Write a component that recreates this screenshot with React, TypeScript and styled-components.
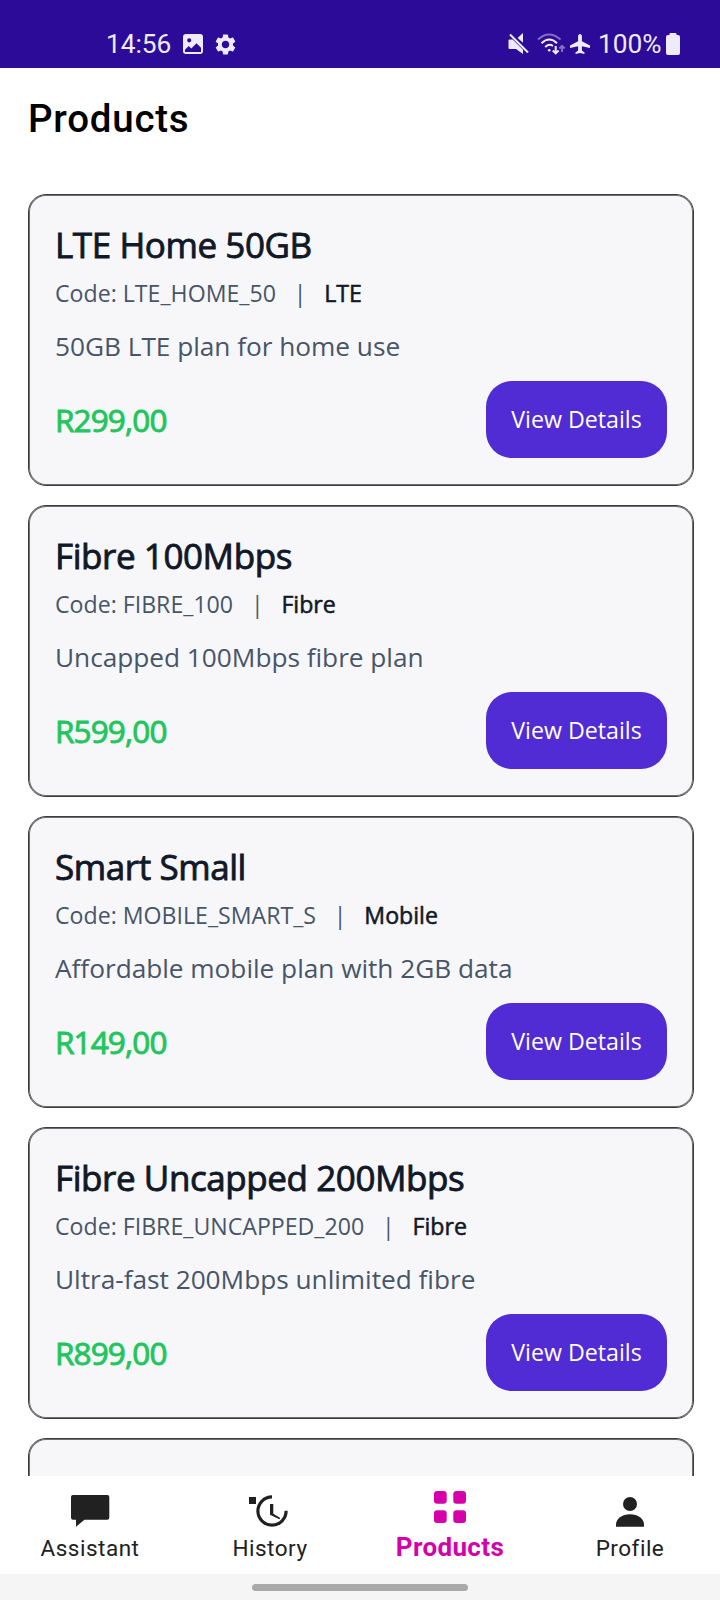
import React from 'react';
import styled, { createGlobalStyle } from 'styled-components';
import { MdSettings } from 'react-icons/md';

const GlobalStyle = createGlobalStyle`
  * { box-sizing: border-box; }
  body { margin: 0; background: #fff; }
`;

const Screen = styled.div`
  width: 720px;
  height: 1600px;
  display: flex;
  flex-direction: column;
  overflow: hidden;
  background: #fff;
  font-family: 'Open Sans', sans-serif;
`;

const StatusBar = styled.header`
  flex: none;
  height: 68px;
  padding: 20px 40px 0 106px;
  display: flex;
  justify-content: space-between;
  background: #2b0b98;
  color: #f0ebfb;
`;

const StatusGroup = styled.div`
  height: 48px;
  display: flex;
  align-items: center;
  svg { display: block; flex: none; }
`;

const StatusText = styled.span<{ $width: number }>`
  width: ${p => p.$width}px;
  font: 400 26.25px/48px Roboto, sans-serif;
  white-space: nowrap;
`;

const PageTitle = styled.h1`
  flex: none;
  height: 126px;
  margin: 0;
  padding: 28px 28px 0;
  font: 500 38.5px/45px Roboto, sans-serif;
  letter-spacing: 0.75px;
  color: #000;
`;

const ProductList = styled.main`
  flex: 1;
  min-height: 0;
  padding: 0 26px 0 28px;
  display: flex;
  flex-direction: column;
  gap: 19px;
  overflow: hidden;
`;

const Card = styled.article`
  flex: none;
  height: 292px;
  padding: 26px 26px 0 26px;
  border: 1px solid #3c3c3c;
  border-radius: 18px;
  box-shadow: inset 0 0 0 1px rgba(64, 64, 64, 0.75);
  background: #f7f7fa;
`;

const ProductName = styled.h2`
  margin: 0;
  font-weight: 400;
  font-size: 35px;
  line-height: 48px;
  letter-spacing: -0.42px;
  color: #111827;
  -webkit-text-stroke: 0.85px #111827;
`;

const Meta = styled.div`
  margin-top: 9px;
  display: flex;
  gap: 17.8px;
  font-size: 23.15px;
  line-height: 31px;
  color: #475569;
`;

const Category = styled.span`
  color: #111827;
  -webkit-text-stroke: 0.55px #111827;
`;

const Description = styled.p`
  margin: 19px 0 0;
  font-size: 26.25px;
  line-height: 36px;
  letter-spacing: -0.03px;
  color: #475569;
`;

const CardFooter = styled.div`
  margin-top: 17px;
  display: flex;
  align-items: center;
  justify-content: space-between;
`;

const Price = styled.span`
  padding-bottom: 1px;
  font-size: 31.5px;
  line-height: 43px;
  letter-spacing: -0.87px;
  color: #22c55e;
  -webkit-text-stroke: 0.9px #22c55e;
`;

const DetailsButton = styled.button`
  width: 181px;
  height: 77px;
  padding: 0;
  border: 0;
  border-radius: 26px;
  background: #512bd4;
  color: #fff;
  font: 400 23.2px/31px 'Open Sans', sans-serif;
`;

const TabBar = styled.nav`
  flex: none;
  height: 98px;
  display: grid;
  grid-template-columns: repeat(4, 1fr);
  background: #fff;
`;

const Tab = styled.div<{ $active?: boolean }>`
  padding-top: 12px;
  display: flex;
  flex-direction: column;
  align-items: center;
  color: ${p => (p.$active ? '#d600aa' : '#212121')};
  svg { display: block; }
`;

const TabLabel = styled.span<{ $active?: boolean }>`
  margin-top: ${p => (p.$active ? 4 : 5)}px;
  font-family: Roboto, sans-serif;
  font-weight: ${p => (p.$active ? 700 : 400)};
  font-size: ${p => (p.$active ? 26 : 22.5)}px;
  line-height: 30px;
  letter-spacing: ${p => (p.$active ? 0.35 : 0.5)}px;
`;

const GestureArea = styled.footer`
  flex: none;
  height: 26px;
  padding-top: 10px;
  background: #f5f5f5;
`;

const GestureHandle = styled.div`
  width: 216px;
  height: 7px;
  margin: 0 auto;
  border-radius: 4px;
  background: #a9a9a9;
`;

const GalleryIcon = () => (
  <svg width="20" height="20" viewBox="0 0 20 20">
    <path
      fill="currentColor"
      fillRule="evenodd"
      d="M3 0h14a3 3 0 0 1 3 3v14a3 3 0 0 1-3 3H3a3 3 0 0 1-3-3V3a3 3 0 0 1 3-3zM6.2 4.2a2.1 2.1 0 1 0 0 4.2 2.1 2.1 0 0 0 0-4.2zM2 15.8V18h16v-4.2l-4.5-4.6-5.2 5.2-2.6-2.4z"
    />
  </svg>
);

const MutedIcon = () => (
  <svg width="22" height="22" viewBox="0 0 22 22">
    <path fill="currentColor" d="M15 0v9.8L9.6 4.9zM1.5 6.5h3.2L15 16.8V21l-7-5H1.5a1 1 0 0 1-1-1V7.5a1 1 0 0 1 1-1z" />
    <path stroke="currentColor" strokeWidth="2" d="M2 1.5 20 19.5" />
  </svg>
);

const WifiIcon = () => (
  <svg width="29" height="22" viewBox="0 0 29 22" fill="none" stroke="currentColor" strokeWidth="2">
    <path opacity="0.45" d="M1 6.5Q12 -3.5 23.5 6.5" />
    <path d="M4.5 10.2Q12.3 2.8 20 10.2M8.2 14Q12.3 10.2 16 13" />
    <circle cx="12.2" cy="17.2" r="1.3" fill="currentColor" stroke="none" />
    <path d="M18.7 13v7M15.8 17.5l2.9 2.9 2.9-2.9" />
    <path opacity="0.45" d="M25 19v-6M22.3 15.5l2.7-2.7 2.7 2.7" />
  </svg>
);

const PlaneIcon = () => (
  <svg width="20" height="20" viewBox="0 0 20 20">
    <path fill="currentColor" d="M10 0c1 0 1.9 1 1.9 2.2v5l8.1 4.4v2.4l-8.1-1.8v4.3l2.6 1.9V20L10 18.9 5.5 20v-1.6l2.6-1.9v-4.3L0 14v-2.4l8.1-4.4v-5C8.1 1 9 0 10 0z" />
  </svg>
);

const BatteryIcon = () => (
  <svg width="14" height="22" viewBox="0 0 14 22">
    <path fill="currentColor" d="M4.5 0h5a1 1 0 0 1 1 1v1H12a2 2 0 0 1 2 2v16a2 2 0 0 1-2 2H2a2 2 0 0 1-2-2V4a2 2 0 0 1 2-2h1.5V1a1 1 0 0 1 1-1z" />
  </svg>
);

const Gap = styled.span<{ $w: number }>`
  flex: none;
  width: ${p => p.$w}px;
`;

const TabIcon = ({ children }: { children: React.ReactNode }) => (
  <svg width="44" height="40" viewBox="0 0 44 40" fill="currentColor">{children}</svg>
);

const products = [
  { name: 'LTE Home 50GB', code: 'LTE_HOME_50', category: 'LTE', description: '50GB LTE plan for home use', price: 'R299,00' },
  { name: 'Fibre 100Mbps', code: 'FIBRE_100', category: 'Fibre', description: 'Uncapped 100Mbps fibre plan', price: 'R599,00' },
  { name: 'Smart Small', code: 'MOBILE_SMART_S', category: 'Mobile', description: 'Affordable mobile plan with 2GB data', price: 'R149,00' },
  { name: 'Fibre Uncapped 200Mbps', code: 'FIBRE_UNCAPPED_200', category: 'Fibre', description: 'Ultra-fast 200Mbps unlimited fibre', price: 'R899,00' },
];

export default function App() {
  return (
    <Screen>
      <GlobalStyle />
      <StatusBar>
        <StatusGroup>
          <StatusText $width={77}>14:56</StatusText>
          <GalleryIcon />
          <Gap $w={10} />
          <MdSettings size={25} />
        </StatusGroup>
        <StatusGroup>
          <MutedIcon />
          <Gap $w={7} />
          <WifiIcon />
          <Gap $w={4} />
          <PlaneIcon />
          <Gap $w={8} />
          <StatusText $width={68}>100%</StatusText>
          <BatteryIcon />
        </StatusGroup>
      </StatusBar>
      <PageTitle>Products</PageTitle>
      <ProductList>
        {products.map(p => (
          <Card key={p.code}>
            <ProductName>{p.name}</ProductName>
            <Meta>
              <span>Code: {p.code}</span>
              <span>|</span>
              <Category>{p.category}</Category>
            </Meta>
            <Description>{p.description}</Description>
            <CardFooter>
              <Price>{p.price}</Price>
              <DetailsButton>View Details</DetailsButton>
            </CardFooter>
          </Card>
        ))}
        <Card />
      </ProductList>
      <TabBar>
        <Tab>
          <TabIcon>
            <path d="M5 7h34.3a2 2 0 0 1 2 2v20.7a2 2 0 0 1-2 2H16.5L8 38.7v-7H5a2 2 0 0 1-2-2V9a2 2 0 0 1 2-2z" />
          </TabIcon>
          <TabLabel>Assistant</TabLabel>
        </Tab>
        <Tab>
          <TabIcon>
            <rect x="1" y="9" width="7" height="7" />
            <path fill="none" stroke="currentColor" strokeWidth="3.2" d="M24 8.9A14.1 14.1 0 1 0 38.1 22.7" />
            <path d="M22 16h3.3v9.8l7 4.1-.9 1.4L22 26.8z" />
          </TabIcon>
          <TabLabel>History</TabLabel>
        </Tab>
        <Tab $active>
          <TabIcon>
            <rect x="6" y="3" width="12.7" height="12.7" rx="3.2" />
            <rect x="25.3" y="3" width="12.7" height="12.7" rx="3.2" />
            <rect x="6" y="22.2" width="12.7" height="12.7" rx="3.2" />
            <rect x="25.3" y="22.2" width="12.7" height="12.7" rx="3.2" />
          </TabIcon>
          <TabLabel $active>Products</TabLabel>
        </Tab>
        <Tab>
          <TabIcon>
            <circle cx="22" cy="16" r="7" />
            <path d="M8 38.7v-2C8 31 14 26.3 22 26.3S36 31 36 36.7v2z" />
          </TabIcon>
          <TabLabel>Profile</TabLabel>
        </Tab>
      </TabBar>
      <GestureArea>
        <GestureHandle />
      </GestureArea>
    </Screen>
  );
}
